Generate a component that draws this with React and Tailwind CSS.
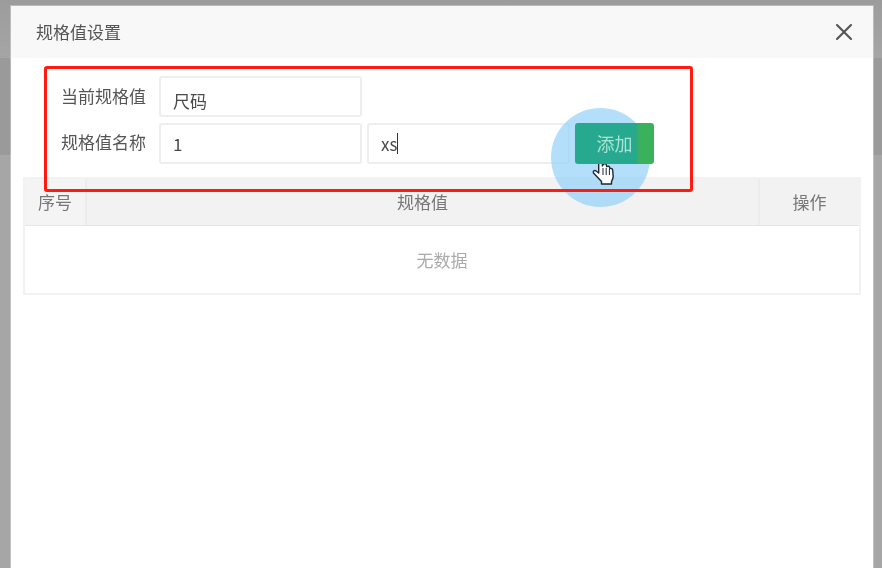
import React from 'react';
import { X } from 'lucide-react';

const font = "font-['Noto_Sans_CJK_SC','Noto_Sans',sans-serif]";

const HandCursor = () => (
  <svg width="26" height="34" viewBox="0 0 26 34" className="absolute left-[591px] top-[153px]">
    <path
      d="M8.500 3c1-1.300 2.800-.8 2.900 1v9l1-1.800c1.600-.9 2.900-.3 3.100 1.200l.2 1.200c1.400-.9 2.800-.4 3 1l.1 1c1.500-.6 2.800.1 2.900 1.600l.5 6.200c0 2-1 3.500-1.700 5.200v2.400H10.500v-2.500L2.500 20c-.9-1.500.7-3.300 2.200-2.200l3 2.200V5c0-.8.200-1.500.8-2z"
      fill="#ffffff"
      stroke="#1c2733"
      strokeWidth="1.400"
      strokeLinejoin="round"
    />
    <path d="M12 15v7M15.200 15v7M18.400 16v6" stroke="#1c2733" strokeWidth="1" fill="none" />
  </svg>
);

const Field = ({ value, caret, offset = '' }) => (
  <div className="w-[203px] h-[41px] flex items-center bg-white border-2 border-[#eeeeee] rounded-[3px] text-[17px] text-[#4a4a4a] pl-3">
    <span className={offset}>{value}</span>
    {caret && <span className="w-px h-[21px] bg-[#333]" />}
  </div>
);

export default function App() {
  return (
    <div className={`relative w-[882px] h-[568px] overflow-hidden bg-[linear-gradient(180deg,#9c9c9c_0,#a5a5a5_58px,#9a9a9a_58px,#9a9a9a_155px,#a6a6a6_155px)] pl-[11px] pt-[6px] blur-[0.4px] ${font}`}>
      {/* modal */}
      <div className="w-[862px] h-[562px] bg-white ring-1 ring-white/30">
        <div className="h-[52px] bg-[#f8f8f8] flex items-center justify-between pl-[25px] pr-[15px]">
          <span className="text-[17px] text-[#555]">规格值设置</span>
          <X size={28} strokeWidth={1.800} className="text-[#555]" />
        </div>

        <div className="pl-[12px] pr-[12px] pt-[18px]">
          <div className="flex flex-col gap-[6px] pl-[38px]">
            <div className="flex items-center gap-3">
              <span className="w-[86px] whitespace-nowrap text-[17px] text-[#555] leading-none -mt-[3px]">当前规格值</span>
              <Field value="尺码" offset="mt-[8px]" />
            </div>
            <div className="flex items-center gap-3">
              <span className="w-[86px] whitespace-nowrap text-[17px] text-[#555] leading-none -mt-[4px]">规格值名称</span>
              <Field value="1" />
              <div className="ml-[-7px]">
                <Field value="xs" caret />
              </div>
              <div className="relative z-10 ml-[-7px] w-[79px] h-[41px] rounded-[3px] bg-[linear-gradient(90deg,#26a98f_0%,#26a98f_76%,#3cb15c_82%,#3cb15c_100%)] flex items-center justify-center text-[18px] text-[#a9e3d8]">
                添加
              </div>
            </div>
          </div>

          {/* table */}
          <div className="mt-[13px] w-[838px] h-[118px] border-2 border-[#f2f2f2] flex flex-col text-[17px] text-[#777]">
            <div className="h-[47px] bg-[#f2f2f2] border-b border-[#e6e6e6] flex">
              <div className="w-[62px] flex items-center justify-center border-r-2 border-[#ececec] bg-[#f4f4f4]">序号</div>
              <div className="flex-1 flex items-center justify-center border-r-2 border-[#ececec]">规格值</div>
              <div className="w-[99px] flex items-center justify-center">操作</div>
            </div>
            <div className="flex-1 flex items-center justify-center text-[17px] text-[#aaa]">无数据</div>
          </div>
        </div>
      </div>

      {/* click highlight */}
      <div className="absolute left-[551px] top-[108px] w-[99px] h-[99px] rounded-full bg-[#93d2f9]/70" />
      {/* annotation box */}
      <div className="absolute left-[44px] top-[66px] w-[649px] h-[126px] border-[3px] border-[#ff1a12] rounded-[3px]" />
      <HandCursor />
    </div>
  );
}
